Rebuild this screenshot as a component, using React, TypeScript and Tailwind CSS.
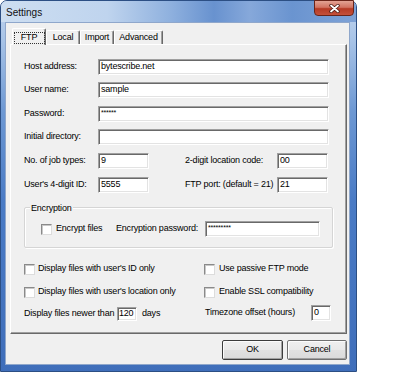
const sunken =
  "bg-white border border-t-[#a0a0a0] border-l-[#a0a0a0] border-b-white border-r-white shadow-[inset_1px_1px_0_#696969,inset_-1px_-1px_0_#e3e3e3]";

function Field({ value, className }: { value?: string; className: string }) {
  return (
    <div className={`${sunken} shrink-0 flex items-center pl-[2px] overflow-hidden whitespace-nowrap ${className}`}>
      {value}
    </div>
  );
}

function Check() {
  return (
    <div className="w-[11px] h-[11px] shrink-0 bg-white border border-t-[#8a8a8a] border-l-[#8a8a8a] border-b-[#dcdcdc] border-r-[#dcdcdc] shadow-[inset_1px_1px_0_#c8c8c8]" />
  );
}

function Tab({ label, selected, w }: { label: string; selected?: boolean; w: string }) {
  return (
    <div
      className={`${w} ${
        selected ? "h-[17px] -mb-[1px] z-10 bg-[#f0f0f0]" : "h-[14px]"
      } flex items-center justify-center border-t border-l border-t-white border-l-white border-r border-r-[#696969] shadow-[inset_-1px_0_0_#a0a0a0] rounded-t-[2px]`}
    >
      {selected ? (
        <span className="w-[31px] h-[12px] flex items-center justify-center border border-dotted border-[#333] mt-[1px]">{label}</span>
      ) : (
        <span>{label}</span>
      )}
    </div>
  );
}

function Button({ label, w, def }: { label: string; w: string; def?: boolean }) {
  return (
    <div
      className={`${w} h-[20px] flex items-center justify-center border ${
        def ? "border-[#3c3c3c]" : "border-[#707070]"
      } bg-[linear-gradient(to_bottom,#f0f0f0,#e9e9e9_50%,#e1e1e1_51%,#dadada)] shadow-[inset_1px_1px_0_#fcfcfc,inset_-1px_-1px_0_#a0a0a0] rounded-[2px]`}
    >
      {label}
    </div>
  );
}

export default function App() {
  return (
    <div className="w-[400px] h-[373px] bg-white font-['Liberation_Sans',Arial,sans-serif] text-[9px] tracking-[-0.2px] text-black">
      <div className="relative w-[357px] h-[372px] flex flex-col border border-[#2c4f84] rounded-t-[7px] bg-[linear-gradient(to_bottom,#c3d6ee_0px,#a7c3e7_40px,#6d98d3_110px,#4a7bc5_200px,#3f6eba_372px)]">
        {/* title bar */}
        <div className="h-[21px] flex items-center pl-[5px] rounded-t-[6px] bg-[linear-gradient(to_right,#cddef1_0%,#bfd4ee_30%,#8eb0de_48%,#6892cf_60%,#86a8da_70%,#6a94d0_82%,#7ea2d6_100%)]">
          <span className="text-[10px] tracking-normal text-[#111] mt-[1px]">Settings</span>
        </div>
        <div className="absolute top-[-1px] right-[2px] w-[40px] h-[16px] rounded-b-[4px] border border-[#6a2419] bg-[linear-gradient(to_bottom,#e3a394_0%,#d27362_45%,#b63a25_55%,#c4503a_100%)] flex items-center justify-center">
          <svg width="11" height="9" viewBox="0 0 11 9">
            <path d="M2 1.5 L9 7.5 M9 1.5 L2 7.5" stroke="#4a1a12" strokeWidth="3.4" strokeLinecap="round" />
            <path d="M2 1.5 L9 7.5 M9 1.5 L2 7.5" stroke="#ffffff" strokeWidth="1.8" strokeLinecap="round" />
          </svg>
        </div>

        {/* client area */}
        <div className="flex-1 ml-[4px] mr-[6px] mb-[6px] bg-[#f0f0f0] border border-[#8fa7cb] flex flex-col pl-[4px] pr-[2px] pt-[5px]">
          <div className="flex items-end pl-[2px] h-[16px]">
            <Tab label="FTP" selected w="w-[34px]" />
            <Tab label="Local" w="w-[34px]" />
            <Tab label="Import" w="w-[34px]" />
            <Tab label="Advanced" w="w-[49px]" />
          </div>

          {/* tab page */}
          <div className="w-[337px] h-[290px] border border-t-white border-l-white border-r-[#696969] border-b-[#696969] shadow-[inset_-1px_-1px_0_#a0a0a0] flex flex-col pl-[13px]">
            <div className="flex items-center h-[16px] mt-[14px]">
              <span className="w-[74px]">Host address:</span>
              <Field value="bytescribe.net" className="w-[231px] h-[16px]" />
            </div>
            <div className="flex items-center h-[16px] mt-[7px]">
              <span className="w-[74px]">User name:</span>
              <Field value="sample" className="w-[231px] h-[16px]" />
            </div>
            <div className="flex items-center h-[16px] mt-[8px]">
              <span className="w-[74px]">Password:</span>
              <Field value="******" className="w-[231px] h-[16px] items-start! pt-[1px] text-[7px]" />
            </div>
            <div className="flex items-center h-[16px] mt-[7px]">
              <span className="w-[74px]">Initial directory:</span>
              <Field className="w-[231px] h-[16px]" />
            </div>
            <div className="flex items-center h-[16px] mt-[8px]">
              <span className="w-[74px]">No. of job types:</span>
              <Field value="9" className="w-[51px] h-[16px]" />
              <span className="w-[92px] ml-[36px] whitespace-nowrap">2-digit location code:</span>
              <Field value="00" className="w-[51px] h-[16px]" />
            </div>
            <div className="flex items-center h-[16px] mt-[8px]">
              <span className="w-[74px]">User's 4-digit ID:</span>
              <Field value="5555" className="w-[51px] h-[16px]" />
              <span className="w-[92px] ml-[36px] whitespace-nowrap">FTP port: (default = 21)</span>
              <Field value="21" className="w-[51px] h-[16px]" />
            </div>

            {/* encryption group */}
            <div className="relative w-[309px] h-[41px] mt-[14px] border border-[#d5d5d5] rounded-[2px] shadow-[1px_1px_0_#ffffff,inset_1px_1px_0_#ffffff] flex items-center pl-[16px] pt-[3px]">
              <span className="absolute -top-[6px] left-[5px] bg-[#f0f0f0] px-[1px]">Encryption</span>
              <Check />
              <span className="w-[60px] ml-[4px]">Encrypt files</span>
              <span className="w-[89px] whitespace-nowrap">Encryption password:</span>
              <Field value="*********" className="w-[115px] h-[16px] items-start! pt-[1px] text-[7px]" />
            </div>

            <div className="flex items-center h-[16px] mt-[13px]">
              <div className="w-[180px] flex items-center">
                <Check />
                <span className="ml-[3px]">Display files with user's ID only</span>
              </div>
              <Check />
              <span className="ml-[4px]">Use passive FTP mode</span>
            </div>
            <div className="flex items-center h-[16px] mt-[7px]">
              <div className="w-[180px] flex items-center">
                <Check />
                <span className="ml-[3px] whitespace-nowrap">Display files with user's location only</span>
              </div>
              <Check />
              <span className="ml-[4px]">Enable SSL compatibility</span>
            </div>
            <div className="flex items-center h-[16px] mt-[5px]">
              <div className="w-[181px] flex items-center self-end h-[14px]">
                <span className="w-[93px] whitespace-nowrap">Display files newer than</span>
                <Field value="120" className="w-[20px] h-[14px] pl-[1px]!" />
                <span className="ml-[5px]">days</span>
              </div>
              <span className="w-[106px] whitespace-nowrap">Timezone offset (hours)</span>
              <Field value="0" className="w-[20px] h-[16px]" />
            </div>
          </div>

          <div className="flex justify-end gap-[4px] mt-[6px]">
            <Button label="OK" w="w-[61px]" def />
            <Button label="Cancel" w="w-[60px]" />
          </div>
        </div>
      </div>
    </div>
  );
}
